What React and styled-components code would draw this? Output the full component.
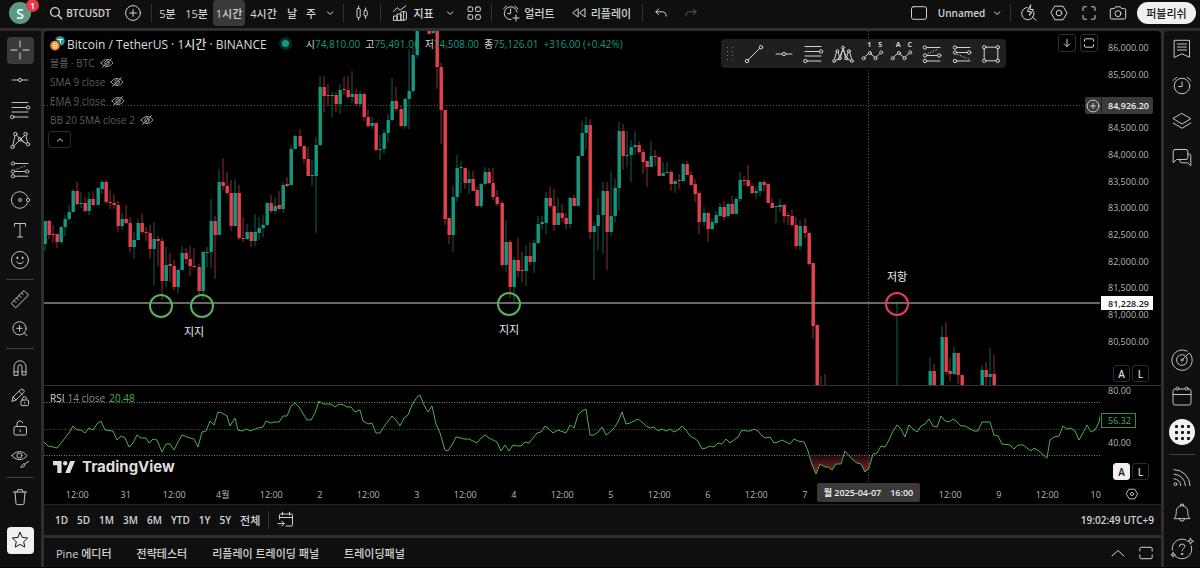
import React from 'react';
import styled, { createGlobalStyle, css } from 'styled-components';

const COLORS = {
  bar: '#0f0f0f',
  gutter: '#2e2e2e',
  active: '#3a3a3a',
  line: '#333333',
  text: '#d4d4d4',
  axis: '#b8b8b8',
  muted: '#5c5c5c',
  up: '#14987f',
  down: '#e6404d',
  rsi: '#4caf50',
};
const FONT_FAMILY = `'Open Sans', 'Noto Sans', 'Noto Sans CJK KR', sans-serif`;
const FONT_SIZE_1 = '9px';
const FONT_SIZE_2 = '10px';
const FONT_SIZE_3 = '11px';

const GlobalStyle = createGlobalStyle`
  * {
    box-sizing: border-box;
  }
  body {
    margin: 0;
    background: #000;
    color: ${COLORS.text};
    font-family: ${FONT_FAMILY};
    font-size: ${FONT_SIZE_3};
  }
  button {
    margin: 0;
    padding: 0;
    border: 0;
    background: none;
    color: inherit;
    font: inherit;
    white-space: nowrap;
    cursor: pointer;
  }
`;

/* ---------- icons ---------- */

const Svg = styled.svg`
  display: block;
  flex: none;
  fill: none;
  stroke: currentColor;
  stroke-width: ${(props) => props.$weight || 1};
  stroke-linecap: round;
  stroke-linejoin: round;
  overflow: visible;
`;

const Dot = ({ x, y, r = 1.7 }) => <circle cx={x} cy={y} r={r} />;

const ICONS = {
  cross: <path d="M10 1v6M10 13v6M1 10h6M13 10h6" />,
  hline: (
    <>
      <path d="M2 10h6M12 10h6" />
      <Dot x={10} y={10} />
    </>
  ),
  fib: (
    <>
      <path d="M2 2.5h16M2 7.5h14.5M2 12h16M4 17h14" />
      <Dot x={18} y={7.5} />
      <Dot x={2.3} y={17} />
    </>
  ),
  pattern: (
    <>
      <path d="M2.8 15.2L5 5.8M6.5 5.3l7.8 7.2M14.5 5.6L4 15.8M15.9 5.9l1.7 6.6M11.5 10.7l5 3" />
      <Dot x={2.5} y={17} />
      <Dot x={5.3} y={4} />
      <Dot x={10} y={9.3} />
      <Dot x={15.5} y={4} />
      <Dot x={18} y={14.2} />
    </>
  ),
  projection: (
    <>
      <path d="M4.7 3.5H18M4.7 11.5h10.8M4.7 16.2H18" />
      <path d="M6 9.5l10-4" strokeDasharray="0.5 2.4" />
      <Dot x={3} y={3.5} />
      <Dot x={3} y={11.5} />
      <Dot x={17.2} y={11.5} />
      <Dot x={3} y={16.2} />
    </>
  ),
  longPosition: (
    <>
      <path d="M4.7 3.5H18M4.7 11.5h10.8M4.7 17H18" />
      <path d="M6 9.5l10-4.5" strokeDasharray="0.5 2.4" />
      <Dot x={3} y={3.5} />
      <Dot x={3} y={11.5} />
      <Dot x={17.2} y={11.5} />
      <Dot x={3} y={17} />
    </>
  ),
  shortPosition: (
    <>
      <path d="M4.7 3.5H18M4.7 8.5h10.8M4.7 17H18" />
      <path d="M5.5 10.5l11 4.5" strokeDasharray="0.5 2.4" />
      <Dot x={3} y={3.5} />
      <Dot x={3} y={8.5} />
      <Dot x={17.2} y={8.5} />
      <Dot x={3} y={17} />
    </>
  ),
  ellipse: (
    <>
      <path d="M17.6 7.2A8.3 8.3 0 1 0 17.6 12.8" />
      <Dot x={10} y={10} r={1.5} />
      <Dot x={18} y={10} />
    </>
  ),
  type: <path d="M4.5 6V3.5h11V6M10 3.5v13.5M7.5 17h5" />,
  smile: (
    <>
      <Dot x={10} y={10} r={8.5} />
      <path d="M6.5 11.8c1.2 2.4 5.8 2.4 7 0" />
      <path d="M7.4 7.5v.8M12.6 7.5v.8" strokeWidth="1.8" />
    </>
  ),
  ruler: (
    <path d="M1.5 14L14 1.5l4.5 4.5L6 18.5zM4 11.5l2 2M6.5 9l1.6 1.6M9 6.5l2 2M11.5 4l1.6 1.6" />
  ),
  zoomIn: (
    <>
      <Dot x={9.5} y={9.3} r={6.6} />
      <path d="M14.3 14.1L17 16.8M6.7 9.3h5.6M9.5 6.5v5.6" />
    </>
  ),
  magnet: (
    <path d="M4 17V8.8a6 6 0 0 1 12 0V17h-4V8.8a2 2 0 0 0-4 0V17zM4 13.8h4M12 13.8h4" />
  ),
  pencilLock: (
    <>
      <path d="M2 13l1-4L10.5 1.8a2 2 0 0 1 3 3L6 12zM3 9l3 3M9 3.3l3 3" />
      <rect x="11" y="12" width="7.5" height="5.6" rx="1" />
      <path d="M12.5 12v-1.3a2 2 0 0 1 4 0M14.8 14.3v1" />
    </>
  ),
  unlock: (
    <>
      <rect x="4" y="8.5" width="12.5" height="8.5" rx="1.5" />
      <path d="M7 8.5V6a3 3 0 0 1 5.8-1.2M10.2 11.8v2" />
    </>
  ),
  eyeBrush: (
    <>
      <path d="M2 7.6C5.5 2.3 13.3 2.3 16.8 7.6 13.3 13 5.5 13 2 7.6z" />
      <Dot x={9.4} y={7.6} r={2.5} />
      <path d="M18.6 13.5l-3.4 2M11 19c3 .3 4.6-1 4-2.6-1.3-1.3-2.6-.3-2.7.9-.1.9-.5 1.3-1.3 1.7z" />
    </>
  ),
  trash: (
    <path d="M3.5 5h13M7 5l.8-2.4h4.4L13 5M5 5l1 11.6q.2 1 1.2 1h5.6q1 0 1.2-1L15 5" />
  ),
  star: (
    <path d="M10 2.4l2.3 5 5.4.6-4 3.7 1.1 5.4L10 14.4l-4.8 2.7 1.1-5.4-4-3.7 5.4-.6z" />
  ),
  search: (
    <>
      <Dot x={9} y={9} r={4.4} />
      <path d="M12.3 12.3l3.4 3.4" />
    </>
  ),
  plusCircle: (
    <>
      <Dot x={10} y={10} r={7.4} />
      <path d="M10 6.7v6.6M6.7 10h6.6" />
    </>
  ),
  chevronDown: <path d="M7.5 8.9l2.7 2.5 2.7-2.5" />,
  chevronUp: <path d="M4 13l6-5.5 6 5.5" />,
  caretUp: <path d="M7.3 11.2L10 8.7l2.7 2.5" />,
  candles: (
    <>
      <rect x="5" y="5.5" width="3.2" height="9" rx="1" />
      <rect x="12" y="7.5" width="3.2" height="5.5" rx="1" />
      <path d="M6.6 3v2.5M6.6 14.5V17M13.6 5v2.5M13.6 13v2.5" />
    </>
  ),
  indicators: (
    <>
      <path d="M3.5 8.5l3.6-3.8 3 2.5 5.8-4.4" />
      <path d="M3.5 17v-4h3.6v4zM7.1 17v-6h3.8v6zM10.9 17V9.5q0-.8.8-.8h3.9q.8 0 .8.8v6.6q0 .9-.9.9zM13.6 17V8.7" />
    </>
  ),
  layouts: (
    <>
      <rect x="4" y="4" width="4.7" height="4.5" rx="1" />
      <rect x="11.6" y="4" width="4.7" height="4.5" rx="1" />
      <rect x="4" y="11.8" width="4.7" height="4.5" rx="1" />
      <rect x="11.6" y="11.8" width="4.7" height="4.5" rx="1" />
    </>
  ),
  alertAdd: (
    <>
      <path d="M16 9a6.4 6.4 0 1 0-6 7.6M9.6 6v4.6H6.8M2.6 5.8L5.6 3M13.8 3l3 2.8M15 12v6M12 15h6" />
    </>
  ),
  alarm: (
    <>
      <Dot x={10} y={11} r={7.8} />
      <path d="M10 7v4.5H6.5M1 5.5l3.8-3.3M15.2 2.2L19 5.5" />
    </>
  ),
  rewind: <path d="M9.2 6v8L4 10zM16 6v8l-5.2-4z" />,
  undo: <path d="M7.6 6L4.9 8.8l2.7 2.8M5 8.8h6.5q3.6 0 3.6 4.4" />,
  redo: <path d="M12.4 6l2.7 2.8-2.7 2.8M15 8.8H8.5q-3.6 0-3.6 4.4" />,
  layoutBox: <rect x="2.5" y="3.7" width="15" height="12.6" rx="2" />,
  quickSearch: (
    <>
      <path d="M14.8 8.8A6.2 6.2 0 1 1 8.2 4.4M13.2 13.8l4 3.6" />
      <path d="M11.6 2L8.4 8.5h3l-.8 4 3.8-6h-3z" />
    </>
  ),
  settings: (
    <>
      <path d="M6 3.2h8l4 6.8-4 6.8H6L2 10z" />
      <Dot x={10} y={10} r={2.8} />
    </>
  ),
  fullscreen: (
    <path d="M4 7.5V4.8q0-1 1-1h2.5M12.5 3.8H15q1 0 1 1v2.7M16 12.5v2.7q0 1-1 1h-2.5M7.5 16.2H5q-1 0-1-1v-2.7" />
  ),
  camera: (
    <>
      <path d="M3.5 5.6h3L7.6 3.8h4.8l1.1 1.8h3q1.2 0 1.2 1.2v8q0 1.2-1.2 1.2h-13q-1.2 0-1.2-1.2v-8q0-1.2 1.2-1.2z" />
      <Dot x={10} y={10.6} r={3} />
    </>
  ),
  arrowDown: <path d="M10 6.4v7M7.3 10.9l2.7 2.7 2.7-2.7" />,
  maximize: (
    <path d="M5.5 8.3V7q0-1.2 1.2-1.2h6.6q1.2 0 1.2 1.2v1.3M14.5 11.7V13q0 1.2-1.2 1.2H6.7q-1.2 0-1.2-1.2v-1.3" />
  ),
  restore: (
    <path d="M3.8 8V5.7q0-1.4 1.4-1.4h9.6q1.4 0 1.4 1.4V8M16.2 12v2.3q0 1.4-1.4 1.4H5.2q-1.4 0-1.4-1.4V12" />
  ),
  trend: (
    <>
      <path d="M4.3 15.7L15.7 4.3" />
      <Dot x={3} y={17} />
      <Dot x={17} y={3.2} />
    </>
  ),
  harmonic: (
    <>
      <path d="M1.4 15.4L3.5 8.2M5.1 8.2l1.6 5M7.6 13l2-7.5M10.5 5.5l2 7.5M13.5 13l1.7-4.8M16.7 8.2l2 7.2M5 16l4.8-10M15 16L10.3 6M3 16.2l2.8-1.6M17.2 16.2l-2.8-1.6" />
      <Dot x={1.2} y={17} r={1.4} />
      <Dot x={4.3} y={7} r={1.4} />
      <Dot x={7} y={14.3} r={1.4} />
      <Dot x={10} y={3.6} r={1.4} />
      <Dot x={13} y={14.3} r={1.4} />
      <Dot x={15.9} y={7} r={1.4} />
      <Dot x={18.8} y={17} r={1.4} />
    </>
  ),
  wave: (
    <>
      <path d="M1.8 13l4-3.6M8 10.2l3.7 3M13.4 13l3.6-3.6" />
      <Dot x={0.6} y={14.3} r={1.5} />
      <Dot x={6.9} y={9} r={1.5} />
      <Dot x={12.5} y={14.3} r={1.5} />
      <Dot x={18.2} y={8.4} r={1.5} />
    </>
  ),
  square: (
    <>
      <path d="M3.2 4.8v10.4M16.8 4.8v10.4M4.8 3.2h10.4M4.8 16.8h10.4" />
      <Dot x={3.2} y={3.2} />
      <Dot x={16.8} y={3.2} />
      <Dot x={3.2} y={16.8} />
      <Dot x={16.8} y={16.8} />
    </>
  ),
  watchlist: <path d="M2.5 1.3h15v17L10 14.8l-7.5 3.5zM5.5 5h9M5.5 8h9M5.5 11h9" />,
  layers: <path d="M10 2.5l8.8 5.2L10 13 1.2 7.7zM1.2 12L10 17.3l8.8-5.3" />,
  chat: (
    <path d="M3 2.5h11q1.8 0 1.8 1.8v6.4q0 1.8-1.8 1.8H4.6L1.2 15.8V4.3Q1.2 2.5 3 2.5zM15.8 7h1.2q1.8 0 1.8 1.8v10l-3.2-3H9.8Q8.2 15.8 8 14v-1.3" />
  ),
  radar: (
    <>
      <path d="M17.8 3.4A10.2 10.2 0 1 1 15.1 1.2M14.4 6.9A5.4 5.4 0 1 1 12.7 5.3M10.8 9.2L17 3" />
      <Dot x={10} y={10} r={1} />
    </>
  ),
  calendar: (
    <>
      <path d="M4 3h-.8Q1 3 1 5.2v11.6Q1 19 3.2 19h13.6q2.2 0 2.2-2.2V5.2Q19 3 16.8 3H16M7 3h6M1 8.5h18" />
      <Dot x={5.4} y={2.6} r={1.5} />
      <Dot x={14.6} y={2.6} r={1.5} />
    </>
  ),
  stream: (
    <>
      <path d="M2 2.6A16 16 0 0 1 18 18.6M2 7.2A11.4 11.4 0 0 1 13.4 18.6M2 11.8a6.8 6.8 0 0 1 6.8 6.8" />
      <Dot x={3.4} y={17.2} r={1.4} />
    </>
  ),
  bell: (
    <path d="M2.4 15.4q1.8-1.6 1.8-5V8.5a5.8 5.8 0 0 1 11.6 0v1.9q0 3.4 1.8 5zM8.6 2.7V1.2h2.8v1.5M7.4 15.6q0 2.6 2.6 2.6t2.6-2.6" />
  ),
  help: (
    <>
      <path d="M14.2 1.1A9.8 9.8 0 0 0 .3 11.2M3.1 17A9.8 9.8 0 0 0 19.3 7" />
      <path d="M7.2 7.6q0-2.6 2.8-2.6t2.8 2.4c0 2-2.8 2-2.8 4.4" />
      <Dot x={10} y={15} r={0.8} />
      <path d="M18.5-.8l.8 2.2 2.2.8-2.2.8-.8 2.2-.8-2.2-2.2-.8 2.2-.8zM1.2 13.5l.6 1.7 1.7.6-1.7.6-.6 1.7-.6-1.7-1.7-.6 1.7-.6z" />
    </>
  ),
  hidden: (
    <>
      <path d="M4.2 10C7 5.3 13 5.3 15.8 10 13 14.7 7 14.7 4.2 10z" />
      <Dot x={10} y={10} r={2.2} />
      <path d="M5.5 14.3l9-8.6" />
    </>
  ),
  goto: (
    <>
      <path d="M3.5 9V5.2Q3.5 4 4.7 4h10.6q1.2 0 1.2 1.2v9.6q0 1.2-1.2 1.2H10M3.5 7.5h13M6.5 2.2V5M13.5 2.2V5M2 13.6h6M5.8 11.2L8.2 13.6 5.8 16" />
    </>
  ),
  gear: (
    <>
      <path d="M7.2 5.2h5.6l2.8 4.8-2.8 4.8H7.2L4.4 10z" />
      <Dot x={10} y={10} r={1.6} />
    </>
  ),
};

function Icon({ name, size = 20, weight }) {
  return (
    <Svg width={size} height={size} viewBox="0 0 20 20" $weight={weight} aria-hidden="true">
      {ICONS[name]}
    </Svg>
  );
}

/* ---------- shell ---------- */

const Shell = styled.div`
  display: flex;
  flex-direction: column;
  gap: 3px;
  height: 100vh;
  min-height: 480px;
  background: ${COLORS.gutter};
  border-bottom: 1px solid #000;
`;

const Body = styled.div`
  display: flex;
  flex: 1;
  gap: 3px;
  min-height: 0;
`;

const Center = styled.main`
  display: flex;
  flex: 1;
  flex-direction: column;
  gap: 3px;
  min-width: 0;
`;

const flexCenter = css`
  display: flex;
  align-items: center;
  justify-content: center;
`;

/* ---------- top bar ---------- */

const TopBar = styled.header`
  display: flex;
  align-items: center;
  justify-content: space-between;
  height: 28px;
  padding-right: 4px;
  padding-bottom: 2px;
  background: ${COLORS.bar};
`;

const BarGroup = styled.div`
  display: flex;
  align-items: center;
`;

const BarButton = styled.button`
  ${flexCenter}
  gap: ${(props) => props.$gap ?? 5}px;
  width: ${(props) => props.$width || 30}px;
  height: 26px;
  border-radius: 4px;
  background: ${(props) => (props.$active ? COLORS.active : 'none')};
  color: ${(props) => (props.$dim ? COLORS.muted : COLORS.text)};
  font-size: ${(props) => (props.$latin ? FONT_SIZE_2 : FONT_SIZE_3)};
  font-weight: ${(props) => (props.$latin ? 600 : 500)};
`;

const BarDivider = styled.span`
  width: 1px;
  height: 18px;
  margin: 0 3px;
  background: ${COLORS.line};
`;

const Avatar = styled.button`
  ${flexCenter}
  position: relative;
  width: 22px;
  height: 22px;
  margin: 0 8px 0 9px;
  border-radius: 50%;
  background: #5b9a85;
  color: #fff;
  font-size: 14px;
  font-weight: 600;
`;

const AvatarBadge = styled.span`
  ${flexCenter}
  position: absolute;
  top: -3px;
  right: -8px;
  width: 13px;
  height: 13px;
  border-radius: 50%;
  background: #e8394a;
  font-size: ${FONT_SIZE_1};
`;

const Publish = styled.button`
  width: 59px;
  height: 22px;
  margin-left: 5px;
  border-radius: 11px;
  background: #f0f0f0;
  color: #161616;
  font-size: ${FONT_SIZE_3};
  font-weight: 500;
`;

function Header() {
  return (
    <TopBar>
      <BarGroup>
        <Avatar aria-label="S">
          S<AvatarBadge>1</AvatarBadge>
        </Avatar>
        <BarButton $width={79} $gap={0} $latin>
          <Icon name="search" weight={1.4} />
          BTCUSDT
        </BarButton>
        <BarButton>
          <Icon name="plusCircle" />
        </BarButton>
        <BarDivider />
        <BarButton $width={25}>5분</BarButton>
        <BarButton $width={33}>15분</BarButton>
        <BarButton $width={32} $active>
          1시간
        </BarButton>
        <BarButton $width={37}>4시간</BarButton>
        <BarButton $width={20}>날</BarButton>
        <BarButton $width={18}>주</BarButton>
        <BarButton $width={20}>
          <Icon name="chevronDown" />
        </BarButton>
        <BarDivider />
        <BarButton>
          <Icon name="candles" />
        </BarButton>
        <BarDivider />
        <BarButton $width={56} $gap={3}>
          <Icon name="indicators" />
          지표
        </BarButton>
        <BarButton $width={20}>
          <Icon name="chevronDown" />
        </BarButton>
        <BarButton $width={28}>
          <Icon name="layouts" />
        </BarButton>
        <BarDivider />
        <BarButton $width={66} $gap={3}>
          <Icon name="alertAdd" />
          얼러트
        </BarButton>
        <BarButton $width={78} $gap={2}>
          <Icon name="rewind" />
          리플레이
        </BarButton>
        <BarDivider />
        <BarButton>
          <Icon name="undo" />
        </BarButton>
        <BarButton $dim>
          <Icon name="redo" />
        </BarButton>
      </BarGroup>
      <BarGroup>
        <BarButton $width={80} $gap={9} $latin>
          <Icon name="layoutBox" />
          Unnamed
        </BarButton>
        <BarButton $width={20}>
          <Icon name="chevronDown" />
        </BarButton>
        <BarDivider />
        <BarButton>
          <Icon name="quickSearch" />
        </BarButton>
        <BarButton>
          <Icon name="settings" />
        </BarButton>
        <BarButton>
          <Icon name="fullscreen" />
        </BarButton>
        <BarButton $width={28}>
          <Icon name="camera" />
        </BarButton>
        <Publish>퍼블리쉬</Publish>
      </BarGroup>
    </TopBar>
  );
}

/* ---------- side bars ---------- */

const DrawBar = styled.nav`
  display: flex;
  flex-direction: column;
  align-items: center;
  width: 41px;
  padding: 4px 1px 12px 0;
  background: ${COLORS.bar};
`;

const DrawSlot = styled.button`
  ${flexCenter}
  height: 30px;
  width: 100%;
  flex: none;
  color: #c4c4c4;
  ${(props) => props.$last && 'margin-top: auto;'}
`;

const DrawTile = styled.span`
  ${flexCenter}
  width: 27px;
  height: 27px;
  border-radius: 4px;
  background: ${(props) => (props.$light ? '#f0f0f0' : COLORS.active)};
  color: ${(props) => (props.$light ? '#161616' : COLORS.text)};
`;

const SideDivider = styled.span`
  flex: none;
  width: ${(props) => props.$width || 28}px;
  height: 1px;
  margin: 4px 0;
  background: #404040;
`;

const DRAW_GROUPS = [
  ['hline', 'fib', 'pattern', 'projection', 'ellipse', 'type', 'smile'],
  ['ruler', 'zoomIn'],
  ['magnet', 'pencilLock', 'unlock', 'eyeBrush'],
  ['trash'],
];

function DrawingTools() {
  return (
    <DrawBar>
      <DrawSlot aria-label="cross">
        <DrawTile>
          <Icon name="cross" />
        </DrawTile>
      </DrawSlot>
      {DRAW_GROUPS.map((group, i) => (
        <React.Fragment key={group[0]}>
          {i > 0 && <SideDivider />}
          {group.map((name) => (
            <DrawSlot key={name} aria-label={name}>
              <Icon name={name} />
            </DrawSlot>
          ))}
        </React.Fragment>
      ))}
      <DrawSlot $last aria-label="star">
        <DrawTile $light>
          <Icon name="star" />
        </DrawTile>
      </DrawSlot>
    </DrawBar>
  );
}

const WidgetBar = styled.nav`
  display: flex;
  flex-direction: column;
  align-items: center;
  justify-content: space-between;
  width: 36px;
  border-top-left-radius: 4px;
  background: ${COLORS.bar};
`;

const WidgetGroup = styled.div`
  display: flex;
  flex-direction: column;
  align-items: center;
`;

const WidgetButton = styled.button`
  ${flexCenter}
  width: 36px;
  height: 36px;
  color: #c4c4c4;
`;

const AppsDisc = styled.span`
  display: grid;
  grid-template-columns: repeat(3, 3px);
  gap: 3px;
  place-content: center;
  width: 26px;
  height: 26px;
  border-radius: 50%;
  background: #f0f0f0;
`;

const AppsDot = styled.span`
  height: 3px;
  border-radius: 1px;
  background: #161616;
`;

function Widgets() {
  return (
    <WidgetBar>
      <WidgetGroup>
        {['watchlist', 'alarm', 'layers', 'chat'].map((name) => (
          <WidgetButton key={name} aria-label={name}>
            <Icon name={name} />
          </WidgetButton>
        ))}
      </WidgetGroup>
      <WidgetGroup>
        <WidgetButton aria-label="radar">
          <Icon name="radar" />
        </WidgetButton>
        <WidgetButton aria-label="calendar">
          <Icon name="calendar" />
        </WidgetButton>
        <WidgetButton aria-label="apps">
          <AppsDisc>
            {Array.from({ length: 9 }, (_, i) => (
              <AppsDot key={i} />
            ))}
          </AppsDisc>
        </WidgetButton>
        <SideDivider $width={26} />
        {['stream', 'bell', 'help'].map((name) => (
          <WidgetButton key={name} aria-label={name}>
            <Icon name={name} />
          </WidgetButton>
        ))}
      </WidgetGroup>
    </WidgetBar>
  );
}

/* ---------- chart data ---------- */

// index, direction, high, body top, body bottom, low
const CANDLES = `
0 u 221 221 244 251|1 d 220 221 235 239|2 d 225 234 235 243|3 d 234 234 242 248|4 u 226 227 242 244|
5 u 215 219 227 236|6 u 205 212 219 221|7 u 189 191 212 212|8 d 182 191 204 206|9 u 192 203 204 208|
10 d 197 203 211 212|11 u 192 199 211 215|12 d 191 199 205 206|13 u 187 188 205 205|14 u 180 182 189 194|
15 d 180 182 202 204|16 d 190 202 203 209|17 d 194 203 205 209|18 d 201 205 226 232|19 u 213 219 226 230|
20 d 205 219 223 224|21 d 217 223 247 252|22 u 232 240 247 259|23 u 219 223 240 240|24 d 214 223 232 234|
25 d 227 232 233 241|26 d 225 233 249 258|27 u 222 239 249 285|28 d 236 239 241 266|29 d 238 241 281 300|
30 u 247 265 281 287|31 d 253 264 266 282|32 d 260 266 287 290|33 u 269 270 287 293|34 u 246 253 270 270|
35 d 248 253 259 264|36 d 246 259 266 276|37 d 248 266 267 268|38 d 264 267 291 295|39 u 251 252 291 300|
40 u 247 252 253 267|41 u 199 221 252 268|42 d 216 221 235 279|43 u 169 182 235 235|44 d 158 182 186 190|
45 d 172 186 193 195|46 d 180 193 226 231|47 u 179 193 226 227|48 d 185 193 238 240|49 d 217 238 239 242|
50 u 224 232 239 240|51 d 231 232 241 247|52 u 214 232 241 246|53 u 217 228 233 240|54 u 215 225 228 237|
55 u 202 203 225 226|56 d 195 203 211 213|57 u 197 206 211 214|58 d 191 205 209 210|59 u 182 185 209 213|
60 d 177 184 186 187|61 u 145 149 185 186|62 u 135 136 149 149|63 d 129 136 146 147|64 d 146 146 159 164|
65 d 147 159 176 176|66 u 160 175 176 186|67 u 137 145 176 233|68 u 76 87 145 146|69 d 76 87 96 112|
70 d 84 95 96 106|71 u 92 95 96 117|72 d 92 95 104 112|73 u 84 90 104 114|74 d 77 89 90 95|
75 d 76 90 97 99|76 u 71 94 97 103|77 d 89 94 104 106|78 u 91 94 104 107|79 d 93 94 117 121|
80 d 110 117 126 128|81 u 117 123 126 129|82 d 123 123 150 151|83 u 135 149 150 160|84 u 130 133 149 154|
85 u 114 120 133 142|86 u 78 101 120 121|87 d 87 101 109 111|88 d 105 109 126 127|89 u 98 99 126 129|
90 u 50 91 99 129|91 u 48 55 91 93|92 u 30 30 55 58|95 d 30 30 34 34|96 u 30 30 33 34|
97 d 30 30 67 89|98 d 63 67 110 144|99 d 110 110 219 225|100 d 217 218 235 244|101 u 186 197 235 252|
102 u 155 168 197 202|103 u 161 167 168 193|104 d 168 168 183 189|105 u 170 179 183 194|106 d 171 179 191 191|
107 d 187 190 206 207|108 u 183 184 206 208|109 u 167 172 184 185|110 d 168 172 183 184|111 d 168 183 197 200|
112 d 190 197 204 206|113 d 201 203 265 267|114 u 220 242 265 272|115 d 240 242 287 298|116 u 257 260 287 303|
117 d 238 260 271 277|118 d 252 270 271 282|119 u 245 256 271 286|120 d 243 256 262 265|121 u 240 243 262 273|
122 u 216 224 243 244|123 u 216 222 224 230|124 u 192 198 223 234|125 d 187 198 206 208|126 d 189 206 225 231|
127 u 198 213 225 225|128 d 204 213 218 222|129 d 213 218 224 229|130 u 197 198 224 228|131 d 195 198 206 206|
132 u 156 156 206 206|133 u 121 133 156 156|134 u 117 125 133 149|135 d 119 125 232 239|136 u 222 226 232 280|
137 u 198 215 226 250|138 u 182 191 215 254|139 d 182 191 232 270|140 u 171 216 232 236|141 u 179 188 216 223|
142 u 122 131 188 210|143 d 124 131 156 170|144 u 131 155 156 167|145 u 140 147 155 182|146 u 131 145 147 155|
147 d 141 145 152 154|148 d 149 152 162 174|149 d 161 161 167 187|150 u 141 156 167 167|151 d 150 156 157 166|
152 d 157 157 176 176|153 u 162 173 176 176|154 u 162 172 173 174|155 d 170 172 184 191|156 u 179 181 184 193|
157 d 174 180 181 189|158 u 163 164 181 182|159 d 161 164 175 175|160 d 171 175 185 185|161 d 179 184 194 202|
162 d 191 193 222 234|163 u 207 213 222 226|164 d 212 213 229 242|165 u 218 222 229 230|166 u 211 215 223 225|
167 u 203 207 216 216|168 d 201 207 217 220|169 u 203 204 216 218|170 d 196 204 214 214|171 u 197 199 214 214|
172 u 172 180 199 202|173 d 176 180 181 186|174 d 165 180 186 187|175 d 183 186 193 194|176 u 187 191 193 199|
177 u 181 182 191 196|178 d 180 182 185 191|179 d 183 184 203 203|180 d 198 203 208 208|181 u 206 206 207 223|
182 u 199 205 207 212|183 d 204 205 216 223|184 d 212 215 216 225|185 d 210 216 225 227|186 d 217 225 246 249|
187 u 220 226 246 250|188 d 218 226 233 238|189 d 232 233 264 266|190 d 263 263 326 339|191 d 325 325 386 386|
192 u 376 386 386 386|193 d 374 386 386 386|211 u 303 386 386 386|219 u 357 371 386 386|220 d 364 371 386 386|
222 u 326 337 386 386|223 d 322 337 372 375|224 d 358 371 374 381|225 u 347 353 374 375|226 d 353 353 375 384|
227 d 375 375 386 386|232 u 365 370 386 386|233 d 362 370 377 386|234 u 348 374 377 386|235 d 355 374 386 386`
  .split('|')
  .map((row) => {
    const [i, dir, ...y] = row.trim().split(' ');
    return { x: Math.round(45 + i * 4.04), up: dir === 'u', y: y.map(Number) };
  });

const RSI_LINE = `44,442 48,446 53,447 57,448 61,443 69,433 73,426 77,430 81,430 85,433 89,428 93,430 97,424
101,421 105,430 113,431 117,440 121,436 125,438 129,447 133,443 137,435 141,438 146,438 149,443 153,439
157,440 162,452 166,444 170,444 174,450 178,442 182,435 190,438 194,439 198,447 202,432 206,431 210,421
214,425 218,412 222,413 227,416 230,426 235,418 238,430 242,431 247,429 250,431 258,428 263,427 266,421
271,423 274,422 279,422 283,416 287,416 291,406 295,403 299,407 307,420 311,420 315,413 319,401 323,404
331,404 335,407 339,404 344,405 347,407 351,407 355,412 360,410 363,421 368,424 372,423 376,433 380,433
383,428 392,416 396,420 400,426 404,418 408,415 412,405 417,397 420,395 424,405 428,412 432,406 436,424
440,433 445,450 448,451 453,443 456,437 461,438 464,439 469,439 473,441 477,443 481,438 485,435 489,438
493,440 497,442 501,451 505,445 509,451 513,445 517,446 521,446 525,442 529,443 537,433 541,432 545,426
549,429 553,433 558,430 566,433 570,425 574,428 578,415 582,411 586,409 590,435 594,435 598,432 602,427
606,435 610,432 614,428 618,422 622,412 626,424 630,423 634,421 638,419 642,422 646,426 650,428 654,427
658,431 662,429 666,431 670,429 674,432 678,430 682,426 686,430 690,436 694,438 698,441 702,449 706,448
710,446 714,447 718,443 722,444 726,439 730,443 734,440 738,437 742,430 746,431 750,431 754,429 758,431
762,436 766,438 770,437 774,443 778,442 782,440 786,442 790,444 794,439 798,441 804,442 808,451 812,465
816,474 820,464 825,467 828,467 832,470 836,464 841,464 845,451 853,460 857,463 861,464 865,472 869,468
873,454 877,453 881,446 885,447 889,440 893,431 897,425 901,429 905,437 909,425 913,429 917,432 921,426
925,424 929,419 933,426 937,427 941,416 945,421 949,422 953,419 957,422 961,426 965,426 974,431 978,431
982,422 986,422 990,422 994,435 998,436 1002,444 1010,445 1014,449 1018,445 1023,445 1031,451 1034,448
1039,451 1047,458 1050,440 1054,437 1059,436 1063,426 1067,429 1071,428 1075,431 1079,440 1084,431
1087,425 1091,432 1095,430 1099,422 1101,412`;

const MARKS = [
  { x: 161, y: 306, color: '#57b35c' },
  { x: 202, y: 306, color: '#57b35c' },
  { x: 509, y: 304, color: '#57b35c' },
  { x: 897, y: 304, color: '#e6404d' },
];

const NOTES = [
  { x: 194, y: 332, text: '지지' },
  { x: 509, y: 330, text: '지지' },
  { x: 897, y: 277, text: '저항' },
];

const PRICES = [
  '86,000.00', '85,500.00', '', '84,500.00', '84,000.00', '83,500.00',
  '83,000.00', '82,500.00', '82,000.00', '81,500.00', '81,000.00', '80,500.00',
];

const TIMES = [
  '12:00', '31', '12:00', '4월', '12:00', '2', '12:00', '3', '12:00', '4', '12:00',
  '5', '12:00', '6', '12:00', '7', '', '', '12:00', '9', '12:00', '10',
];

/* ---------- chart ---------- */

const ChartPanel = styled.section`
  display: flex;
  flex: 1;
  flex-direction: column;
  min-height: 0;
  position: relative;
  background: #000;
  border-radius: 4px 4px 0 0;
  overflow: hidden;
`;

const Pane = styled.div`
  display: flex;
  position: relative;
  min-height: 0;
  ${(props) => (props.$height ? `height: ${props.$height}px;` : 'flex: 1;')}
`;

const Plot = styled.div`
  position: relative;
  flex: 1;
  min-width: 0;
`;

const PlotSvg = styled.svg`
  display: block;
  width: 100%;
  height: 100%;
`;

const PaneLine = styled.div`
  position: absolute;
  inset: 0 0 auto;
  height: 1px;
  background: ${COLORS.line};
`;

const Mark = styled.span`
  position: absolute;
  left: ${(props) => ((props.$x - 44) / 1056) * 100}%;
  top: ${(props) => ((props.$y - 31) / 354) * 100}%;
  width: 24px;
  height: 24px;
  border: 2px solid ${(props) => props.$color};
  border-radius: 50%;
  transform: translate(-50%, -50%);
`;

const Note = styled.span`
  position: absolute;
  left: ${(props) => ((props.$x - 44) / 1056) * 100}%;
  top: ${(props) => ((props.$y - 31) / 354) * 100}%;
  color: #f0f0f0;
  font-weight: 400;
  line-height: 14px;
  transform: translate(-50%, -50%);
`;

const AxisColumn = styled.div`
  display: flex;
  flex-direction: column;
  flex: none;
  width: 61px;
  padding: ${(props) => (props.$small ? '0 0 4px 8px' : '4px 0 3px 8px')};
  color: ${COLORS.axis};
  font-size: ${FONT_SIZE_1};
`;

const PriceLabels = styled.div`
  display: grid;
  flex: 1;
  grid-auto-rows: 1fr;
  align-items: center;
  min-height: 0;
  line-height: 12px;
`;

const RsiLabels = styled.div`
  display: flex;
  flex: 1;
  flex-direction: column;
  gap: 14px;
  line-height: 12px;
`;

const ScaleButtons = styled.div`
  display: flex;
  gap: 2px;
  margin: 10px 0 0 5px;
`;

const ScaleButton = styled.button`
  ${flexCenter}
  width: 17px;
  height: 17px;
  border: 1px solid ${(props) => (props.$on ? '#f0f0f0' : '#2c2c2c')};
  border-radius: 3px;
  background: ${(props) => (props.$on ? '#f0f0f0' : '#000')};
  color: ${(props) => (props.$on ? '#161616' : COLORS.text)};
  font-size: ${FONT_SIZE_2};
  font-weight: 600;
`;

const PriceTag = styled.div`
  position: absolute;
  right: 8px;
  top: ${(props) => props.$top}px;
  display: flex;
  align-items: center;
  height: ${(props) => props.$height || 14}px;
  padding: 0 4px 0 7px;
  background: #fff;
  color: #161616;
  font-size: ${FONT_SIZE_1};
  font-weight: 600;
`;

const CursorTag = styled(PriceTag)`
  padding-left: 0;
  border-radius: 2px;
  background: ${COLORS.active};
  color: #f0f0f0;
`;

const CursorAdd = styled.button`
  ${flexCenter}
  width: 17px;
  height: 17px;
  margin-right: 6px;
  border-right: 1px solid #1e1e1e;
`;

const RsiTag = styled.output`
  position: absolute;
  top: 28px;
  right: 25px;
  width: 35px;
  height: 15px;
  padding-left: 6px;
  border: 1px solid #388e3c;
  background: #000;
  color: ${COLORS.rsi};
  font-size: ${FONT_SIZE_1};
  line-height: 13px;
`;

const Legend = styled.div`
  position: absolute;
  top: 3px;
  left: 6px;
`;

const LegendRow = styled.div`
  display: flex;
  align-items: center;
  height: 19px;
  white-space: nowrap;
`;

const Symbol = styled.h1`
  margin: 0 12px 0 2px;
  color: #dcdcdc;
  font-size: 12px;
  font-weight: 500;
`;

const Status = styled.span`
  width: 13px;
  height: 13px;
  margin-right: 14px;
  border: 3px solid #0a2c26;
  border-radius: 50%;
  background: ${COLORS.up};
`;

const Quote = styled.span`
  margin-right: 5px;
  color: ${COLORS.up};
  font-size: ${FONT_SIZE_2};
`;

const QuoteKey = styled.span`
  color: ${COLORS.text};
`;

const Study = styled.span`
  margin-right: 2px;
  color: ${COLORS.muted};
  font-size: ${FONT_SIZE_2};
`;

const EyeButton = styled.button`
  color: #a0a0a0;
`;

const Collapse = styled.button`
  ${flexCenter}
  width: 23px;
  height: 17px;
  margin: 2px 0 0 -2px;
  border: 1px solid #2c2c2c;
  border-radius: 3px;
`;

const CoinIcon = () => (
  <Svg width="15" height="15" viewBox="0 0 15 15" stroke="none" aria-hidden="true">
    <circle cx="10" cy="5" r="4.8" fill="#2a9d9a" stroke="none" />
    <path d="M8 3.5h4.4M10.2 3.5v4" stroke="#fff" />
    <circle cx="5" cy="9.6" r="5.5" fill="#000" stroke="none" />
    <circle cx="5" cy="9.6" r="4.8" fill="#f08c22" stroke="none" />
    <path
      d="M4 7.4h1.6q1.2 0 1.2 1.1T5.6 9.6H4h1.9q1.3 0 1.3 1.1T5.9 11.8H4z"
      stroke="#fff"
      strokeWidth="0.8"
    />
  </Svg>
);

const FloatBar = styled.div`
  position: absolute;
  top: 8px;
  right: 155px;
  display: flex;
  align-items: center;
  width: 285px;
  height: 29px;
  border-radius: 4px;
  background: #1f1f1f;
`;

const Grip = styled.span`
  display: grid;
  grid-template-columns: repeat(2, 1px);
  gap: 3px 4px;
  justify-content: center;
  width: 18px;
`;

const GripDot = styled.span`
  height: 1px;
  background: #777;
`;

const FloatButton = styled.button`
  ${flexCenter}
  position: relative;
  flex: 1;
  height: 29px;
`;

const WaveTag = styled.span`
  position: absolute;
  top: 2px;
  right: 5px;
  display: flex;
  gap: 7px;
  font-size: 7px;
  font-weight: 700;
  line-height: 8px;
`;

const PaneActions = styled.div`
  position: absolute;
  top: 3px;
  right: 63px;
  display: flex;
  gap: 4px;
`;

const PaneAction = styled.button`
  ${flexCenter}
  width: 18px;
  height: 18px;
  border: 1px solid #2f2f2f;
  border-radius: 3px;
  background: #000;
`;

const Candle = ({ x, up, y: [high, top, bottom, low] }) => {
  const color = up ? COLORS.up : COLORS.down;
  return (
    <g fill={color}>
      <rect x={x - 0.5} y={high} width="1" height={low - high} opacity="0.65" />
      <rect x={x - 1.5} y={top} width="3.4" height={bottom - top} />
    </g>
  );
};

const FLOAT_TOOLS = [
  ['trend'], ['hline'], ['fib'], ['harmonic'], ['wave', '1', '5'], ['wave', 'A', 'C'],
  ['longPosition'], ['shortPosition'], ['square'],
];

function PricePane() {
  return (
    <Pane>
      <Plot>
        <PlotSvg viewBox="44 31 1056 354" preserveAspectRatio="none">
          <path d="M44 105.5H1100M868.5 31V385" stroke="#505050" strokeDasharray="1 2" />
          {CANDLES.map((candle) => (
            <Candle key={candle.x} {...candle} />
          ))}
          <path d="M44 303H1100" stroke="#8c8c8c" strokeWidth="1.5" />
        </PlotSvg>
        {MARKS.map((mark) => (
          <Mark key={mark.x} $x={mark.x} $y={mark.y} $color={mark.color} />
        ))}
        {NOTES.map((note) => (
          <Note key={note.x} $x={note.x} $y={note.y}>
            {note.text}
          </Note>
        ))}
      </Plot>
      <AxisColumn>
        <PriceLabels>
          {PRICES.map((price, i) => (
            <span key={i}>{price}</span>
          ))}
        </PriceLabels>
        <ScaleButtons>
          <ScaleButton>A</ScaleButton>
          <ScaleButton>L</ScaleButton>
        </ScaleButtons>
      </AxisColumn>
      <CursorTag $top={66} $height={17}>
        <CursorAdd aria-label="+">
          <Icon name="plusCircle" size={16} />
        </CursorAdd>
        84,926.20
      </CursorTag>
      <PriceTag $top={265}>81,228.29</PriceTag>
      <Legend>
        <LegendRow>
          <CoinIcon />
          <Symbol>Bitcoin / TetherUS · 1시간 · BINANCE</Symbol>
          <Status />
          <Quote><QuoteKey>시</QuoteKey>74,810.00</Quote>
          <Quote><QuoteKey>고</QuoteKey>75,491.06</Quote>
          <Quote><QuoteKey>저</QuoteKey>74,508.00</Quote>
          <Quote><QuoteKey>종</QuoteKey>75,126.01</Quote>
          <Quote>+316.00 (+0.42%)</Quote>
        </LegendRow>
        {['볼륨 · BTC', 'SMA 9 close', 'EMA 9 close', 'BB 20 SMA close 2'].map((study) => (
          <LegendRow key={study}>
            <Study>{study}</Study>
            <EyeButton aria-label={study}>
              <Icon name="hidden" />
            </EyeButton>
          </LegendRow>
        ))}
        <Collapse aria-label="collapse">
          <Icon name="caretUp" />
        </Collapse>
      </Legend>
      <FloatBar>
        <Grip>
          {Array.from({ length: 8 }, (_, i) => (
            <GripDot key={i} />
          ))}
        </Grip>
        {FLOAT_TOOLS.map(([name, first, last], i) => (
          <FloatButton key={i} aria-label={name}>
            <Icon name={name} />
            {first && (
              <WaveTag>
                <span>{first}</span>
                <span>{last}</span>
              </WaveTag>
            )}
          </FloatButton>
        ))}
      </FloatBar>
      <PaneActions>
        <PaneAction aria-label="down">
          <Icon name="arrowDown" />
        </PaneAction>
        <PaneAction aria-label="maximize">
          <Icon name="maximize" />
        </PaneAction>
      </PaneActions>
    </Pane>
  );
}

const RsiLegend = styled.div`
  position: absolute;
  top: 6px;
  left: 6px;
  display: flex;
  gap: 3px;
  color: #8c8c8c;
  font-size: ${FONT_SIZE_2};
  line-height: 14px;
`;

const RsiName = styled.span`
  color: ${COLORS.text};
`;

const RsiValue = styled.span`
  margin-left: 1px;
  color: ${COLORS.rsi};
`;

const Brand = styled.a`
  position: absolute;
  bottom: 7px;
  left: 9px;
  display: flex;
  align-items: center;
  gap: 7px;
  color: #dedede;
  font-family: Inter, 'Open Sans', sans-serif;
  font-size: 15px;
  font-weight: 700;
  line-height: 20px;
  text-decoration: none;
`;

const BrandMark = styled.svg`
  width: 22px;
  height: 12px;
  fill: currentColor;
`;

function RsiPane() {
  return (
    <Pane $height={99}>
      <Plot>
        <PlotSvg viewBox="44 385 1056 99" preserveAspectRatio="none">
          <defs>
            <linearGradient id="oversold" x1="0" y1="455" x2="0" y2="485" gradientUnits="userSpaceOnUse">
              <stop offset="0" stopColor="#e6404d" stopOpacity="0.12" />
              <stop offset="1" stopColor="#e6404d" stopOpacity="0.9" />
            </linearGradient>
            <clipPath id="below">
              <rect x="805" y="455.5" width="70" height="30" />
            </clipPath>
          </defs>
          <path d="M44 402.5H1100M44 455.5H1100" stroke="#808080" strokeDasharray="1 1.5" />
          <path d="M44 429.5H1100" stroke="#4a4a4a" strokeDasharray="1 1.5" />
          <path d="M868.5 385V484" stroke="#505050" strokeDasharray="1 2" />
          <polygon
            points={`44,385 ${RSI_LINE} 1101,385`}
            fill="url(#oversold)"
            clipPath="url(#below)"
          />
          <polyline points={RSI_LINE} fill="none" stroke={COLORS.rsi} strokeLinejoin="round" />
        </PlotSvg>
        <RsiLegend>
          <RsiName>RSI</RsiName>
          <span>14 close</span>
          <RsiValue>20.48</RsiValue>
        </RsiLegend>
        <Brand href="#">
          <BrandMark viewBox="0 0 22 12" aria-hidden="true">
            <path d="M0 0h8.6v12H4.3V4.3H0zM17.2 0H22l-5 12h-4.8z" />
            <circle cx="12.2" cy="2.2" r="2.2" />
          </BrandMark>
          TradingView
        </Brand>
      </Plot>
      <AxisColumn $small>
        <RsiLabels>
          <span>80.00</span>
          <span>60.00</span>
          <span>40.00</span>
        </RsiLabels>
        <ScaleButtons>
          <ScaleButton $on>A</ScaleButton>
          <ScaleButton>L</ScaleButton>
        </ScaleButtons>
      </AxisColumn>
      <RsiTag>56.32</RsiTag>
      <PaneLine />
    </Pane>
  );
}

const TimeAxis = styled.div`
  position: relative;
  display: flex;
  align-items: center;
  height: 20px;
  padding: 0 17px 0 9px;
  color: ${COLORS.axis};
  font-size: ${FONT_SIZE_1};
`;

const TimeLabels = styled.div`
  display: grid;
  flex: 1;
  grid-template-columns: repeat(22, 1fr);
  text-align: center;
  white-space: nowrap;
`;

const AxisSettings = styled.button`
  ${flexCenter}
  width: 24px;
`;

const DateTag = styled.div`
  ${flexCenter}
  position: absolute;
  top: -1px;
  left: 69.2%;
  gap: 9px;
  width: 103px;
  height: 19px;
  border-radius: 2px;
  background: ${COLORS.active};
  color: #f0f0f0;
  font-weight: 600;
`;

const RangeBar = styled.div`
  display: flex;
  align-items: center;
  justify-content: space-between;
  height: 31px;
  padding: 0 7px;
  border-top: 1px solid #242424;
  background: ${COLORS.bar};
  font-size: ${FONT_SIZE_2};
  font-weight: 600;
`;

const RangeButton = styled.button`
  height: 24px;
  margin-right: 1px;
  padding: 0 4px;
`;

const RangeButtonKo = styled(RangeButton)`
  font-size: ${FONT_SIZE_3};
  font-weight: 500;
`;

const TabBar = styled.div`
  display: flex;
  align-items: center;
  justify-content: space-between;
  height: 29px;
  padding: 0 5px 0 12px;
  background: ${COLORS.bar};
`;

const Tabs = styled.div`
  display: flex;
  gap: 25px;
  font-weight: 500;
`;

const TabActions = styled.div`
  display: flex;
  gap: 8px;
`;

export default function App() {
  return (
    <>
      <GlobalStyle />
      <Shell>
        <Header />
        <Body>
          <DrawingTools />
          <Center>
            <ChartPanel>
              <PricePane />
              <RsiPane />
              <TimeAxis>
                <TimeLabels>
                  {TIMES.map((time, i) => (
                    <span key={i}>{time}</span>
                  ))}
                </TimeLabels>
                <AxisSettings aria-label="settings">
                  <Icon name="gear" />
                </AxisSettings>
                <DateTag>
                  <span>월 2025-04-07</span>
                  <span>16:00</span>
                </DateTag>
              </TimeAxis>
              <RangeBar>
                <BarGroup>
                  {['1D', '5D', '1M', '3M', '6M', 'YTD', '1Y', '5Y'].map((range) => (
                    <RangeButton key={range}>{range}</RangeButton>
                  ))}
                  <RangeButtonKo>전체</RangeButtonKo>
                  <BarDivider />
                  <RangeButton aria-label="go to">
                    <Icon name="goto" />
                  </RangeButton>
                </BarGroup>
                <button>19:02:49 UTC+9</button>
              </RangeBar>
            </ChartPanel>
            <TabBar>
              <Tabs>
                <button>Pine 에디터</button>
                <button>전략테스터</button>
                <button>리플레이 트레이딩 패널</button>
                <button>트레이딩패널</button>
              </Tabs>
              <TabActions>
                <button aria-label="open">
                  <Icon name="chevronUp" />
                </button>
                <button aria-label="restore">
                  <Icon name="restore" />
                </button>
              </TabActions>
            </TabBar>
          </Center>
          <Widgets />
        </Body>
      </Shell>
    </>
  );
}
